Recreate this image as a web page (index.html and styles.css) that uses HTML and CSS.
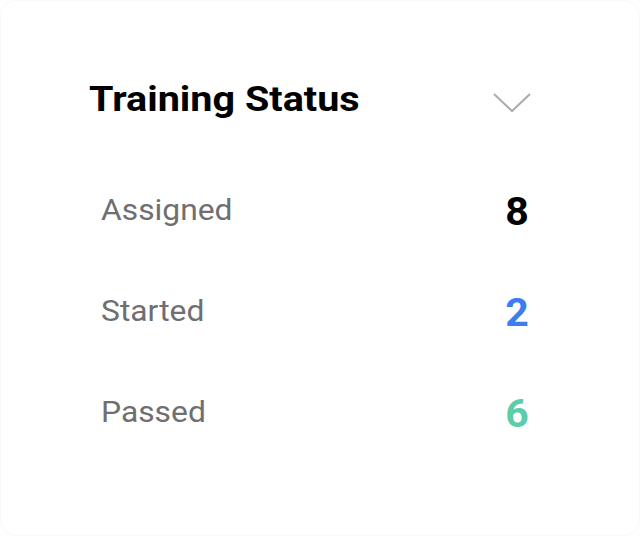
FILE: index.html
```html
<!DOCTYPE html>
<html lang="en">
<head>
  <meta charset="UTF-8">
  <meta name="viewport" content="width=device-width, initial-scale=1.0">
  <title>Training Status</title>
  <link rel="stylesheet" href="styles.css">
</head>
<body>
  <div class="status-card">
    <div class="status-header">
      <h2>Training Status</h2>
      <svg class="chevron" width="38" height="20" viewBox="0 0 38 20">
        <polyline points="1,1 19,18 37,1" fill="none" stroke="#ababab" stroke-width="2"/>
      </svg>
    </div>

    <ul class="status-list">
      <li class="status-row">
        <span class="status-label">Assigned</span>
        <span class="status-count">8</span>
      </li>
      <li class="status-row">
        <span class="status-label">Started</span>
        <span class="status-count started">2</span>
      </li>
      <li class="status-row">
        <span class="status-label">Passed</span>
        <span class="status-count passed">6</span>
      </li>
    </ul>
  </div>
</body>
</html>
```

FILE: styles.css
```css
html, body {
  margin: 0;
  padding: 0;
  background: #fff;
}

body {
  font-family: 'Roboto', 'Liberation Sans', sans-serif;
}

.status-card {
  width: 640px;
  height: 536px;
  box-sizing: border-box;
  border: 1px solid #f9f9f9;
  border-radius: 16px;
  background: #fff;
  padding: 78px 108px 0 88px;
}

.status-header {
  display: flex;
  justify-content: space-between;
  align-items: center;
}

/* the text in this card is drawn a little wider than plain Roboto */
.status-header h2 {
  margin: 0;
  font-size: 35px;
  font-weight: 700;
  color: #000;
  transform: scaleX(1.13);
  transform-origin: left center;
}

.chevron {
  display: block;
  margin-top: 6px;
}

.status-list {
  list-style: none;
  margin: 39px 0 0 0;
  padding: 0 2px 0 12px;
}

.status-row {
  display: flex;
  justify-content: space-between;
  align-items: center;
  height: 101px;
}

.status-label {
  font-size: 30px;
  color: #6f6f6f;
  transform: scaleX(1.06);
  transform-origin: left center;
}

.status-count {
  margin-top: 5px;
  font-size: 38px;
  font-weight: 700;
  color: #000;
  transform: scaleX(1.08);
  transform-origin: right center;
}

.status-count.started {
  color: #3c7df2;
}

.status-count.passed {
  color: #5ccdaa;
}
```
